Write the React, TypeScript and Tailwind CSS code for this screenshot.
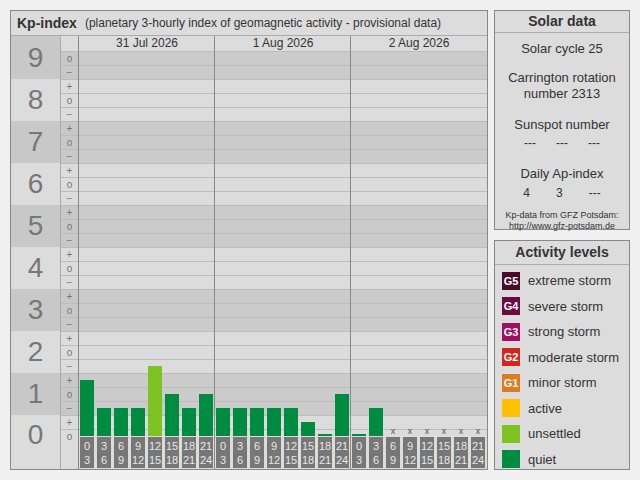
const days = ['31 Jul 2026', '1 Aug 2026', '2 Aug 2026']
// values in thirds (0o=0, 0+=1, 1-=2, 1o=3, ...); null = no data
const bars: (number | null)[] = [
	4, 2, 2, 2, 5, 3, 2, 3,
	2, 2, 2, 2, 2, 1, 0, 3,
	0, 2, null, null, null, null, null, null,
]
const hours = [0, 3, 6, 9, 12, 15, 18, 21]

const legend = [
	{ g: 'G5', label: 'extreme storm', color: 'bg-[#4a0a2a]' },
	{ g: 'G4', label: 'severe storm', color: 'bg-[#6e0a40]' },
	{ g: 'G3', label: 'strong storm', color: 'bg-[#a0105e]' },
	{ g: 'G2', label: 'moderate storm', color: 'bg-[#d0281c]' },
	{ g: 'G1', label: 'minor storm', color: 'bg-[#e07a1e]' },
	{ g: '', label: 'active', color: 'bg-[#ffc000]' },
	{ g: '', label: 'unsettled', color: 'bg-[#7ec322]' },
	{ g: '', label: 'quiet', color: 'bg-[#008c40]' },
]

function barColor(v: number) {
	if (v >= 5) return 'bg-[#7ec322]'
	return 'bg-[#008c40]'
}

function bandOf(r: number) {
	return 9 - Math.floor((r + 1) / 3)
}

export default function App() {
	const rows = Array.from({ length: 28 }, (_, r) => r)
	return (
		<div
			className="flex h-[480px] w-[640px] gap-[6px] bg-[#f0f0f0] p-[10px] text-[#333]"
			style={{ fontFamily: '"Liberation Sans", Arial, sans-serif' }}
		>
			<div className="flex w-[478px] flex-col border border-[#888] bg-[#dcdcdc]">
				<div className="flex h-[26px] items-center gap-[8px] border-b border-[#aaa] px-[6px]">
					<span className="text-[14px] font-bold">Kp-index</span>
					<span className="text-[12px]">
						(planetary 3-hourly index of geomagnetic activity - provisional data)
					</span>
				</div>
				<div className="flex h-[433px]">
					{/* Kp digits */}
					<div className="flex w-[50px] flex-col border-r border-[#aaa] text-[#777]">
						{[9, 8, 7, 6, 5, 4, 3, 2, 1, 0].map((k) => (
							<div
								key={k}
								className={`flex items-center justify-center text-[28px] leading-none ${k % 2 ? 'bg-[#c8c8c8]' : 'bg-[#dcdcdc]'} ${k === 9 ? 'h-[43px]' : k === 0 ? 'flex-1 items-start pt-[6px]' : 'h-[42px]'}`}
							>
								{k}
							</div>
						))}
					</div>
					{/* sublevel markers */}
					<div className="flex w-[18px] flex-col border-r border-[#888] text-[10px] text-[#777]">
						<div className="h-[15px] bg-[#dcdcdc]" />
						{rows.map((r) => {
							const t = 27 - r
							const m = t % 3 === 0 ? 'o' : t % 3 === 2 ? '−' : '+'
							return (
								<div
									key={r}
									className={`flex h-[14px] items-center justify-center border-t border-[#bbb] leading-none ${bandOf(r) % 2 ? 'bg-[#c8c8c8]' : 'bg-[#dcdcdc]'}`}
								>
									{m}
								</div>
							)
						})}
						<div className="flex-1 bg-[#dcdcdc]" />
					</div>
					{/* chart */}
					<div className="relative flex w-[408px] flex-col">
						<div className="flex h-[15px] text-[12px] leading-[15px]">
							{days.map((d) => (
								<div key={d} className="flex-1 text-center">
									{d}
								</div>
							))}
						</div>
						{rows.slice(0, 27).map((r) => (
							<div
								key={r}
								className={`h-[14px] border-t border-[#bcbcbc] ${bandOf(r) % 2 ? 'bg-[#cbcbcb]' : 'bg-[#dcdcdc]'}`}
							/>
						))}
						<div className="h-[7px] border-t border-[#bcbcbc]" />
						<div className="flex h-[33px] pt-[1px]">
							{bars.map((_, i) => (
								<div key={i} className="w-[17px] pl-[1px]">
									<div className="flex h-[31px] w-[14px] flex-col items-center justify-center bg-[#777] text-[11px] leading-[14px] text-[#e8e8e8]">
										<span>{hours[i % 8]}</span>
										<span>{hours[i % 8] + 3}</span>
									</div>
								</div>
							))}
						</div>
						{/* bars */}
						<div className="absolute bottom-[33px] left-0 flex h-[380px] items-end">
							{bars.map((v, i) => (
								<div key={i} className="flex h-full w-[17px] items-end pl-[1px]">
									{v === null ? (
										<div className="w-[14px] text-center text-[9px] leading-[10px] text-[#555]">x</div>
									) : (
										<div
											className={`w-[14px] ${barColor(v)}`}
											style={{ height: v === 0 ? 2 : v * 14 }}
										/>
									)}
								</div>
							))}
						</div>
						{/* day separators */}
						<div className="absolute bottom-0 left-[135px] top-0 w-px bg-[#888]" />
						<div className="absolute bottom-0 left-[271px] top-0 w-px bg-[#888]" />
					</div>
				</div>
			</div>

			<div className="flex w-[138px] flex-col gap-[10px]">
				<div className="flex h-[220px] flex-col border border-[#888] bg-[#dcdcdc] text-center text-[13px]">
					<div className="flex h-[27px] items-center justify-center border-b border-[#aaa] text-[14px] font-bold">
						Solar data
					</div>
					<div className="mt-[6px]">Solar cycle 25</div>
					<div className="mt-[11px] leading-[16px]">
						Carrington rotation
						<br />
						number 2313
					</div>
					<div className="mt-[13px]">Sunspot number</div>
					<div className="flex justify-center gap-[20px] text-[12px]">
						<span>---</span>
						<span>---</span>
						<span>---</span>
					</div>
					<div className="mt-[12px]">Daily Ap-index</div>
					<div className="flex justify-center gap-[26px] text-[12px]">
						<span>4</span>
						<span>3</span>
						<span>---</span>
					</div>
					<div className="mt-[8px] text-[9px] leading-[11px]">
						Kp-data from GFZ Potsdam:
						<br />
						http://www.gfz-potsdam.de
					</div>
				</div>
				<div className="flex h-[230px] flex-col border border-[#888] bg-[#dcdcdc] text-[13px]">
					<div className="flex h-[28px] items-center justify-center border-b border-[#aaa] text-[14px] font-bold">
						Activity levels
					</div>
					<div className="flex flex-col gap-[6px] px-[7px] pt-[6px]">
						{legend.map((l) => (
							<div key={l.label} className="flex items-center gap-[8px]">
								<div
									className={`flex h-[18px] w-[18px] items-center justify-center text-[11px] font-bold text-white ${l.color}`}
								>
									{l.g}
								</div>
								<span>{l.label}</span>
							</div>
						))}
					</div>
				</div>
			</div>
		</div>
	)
}
